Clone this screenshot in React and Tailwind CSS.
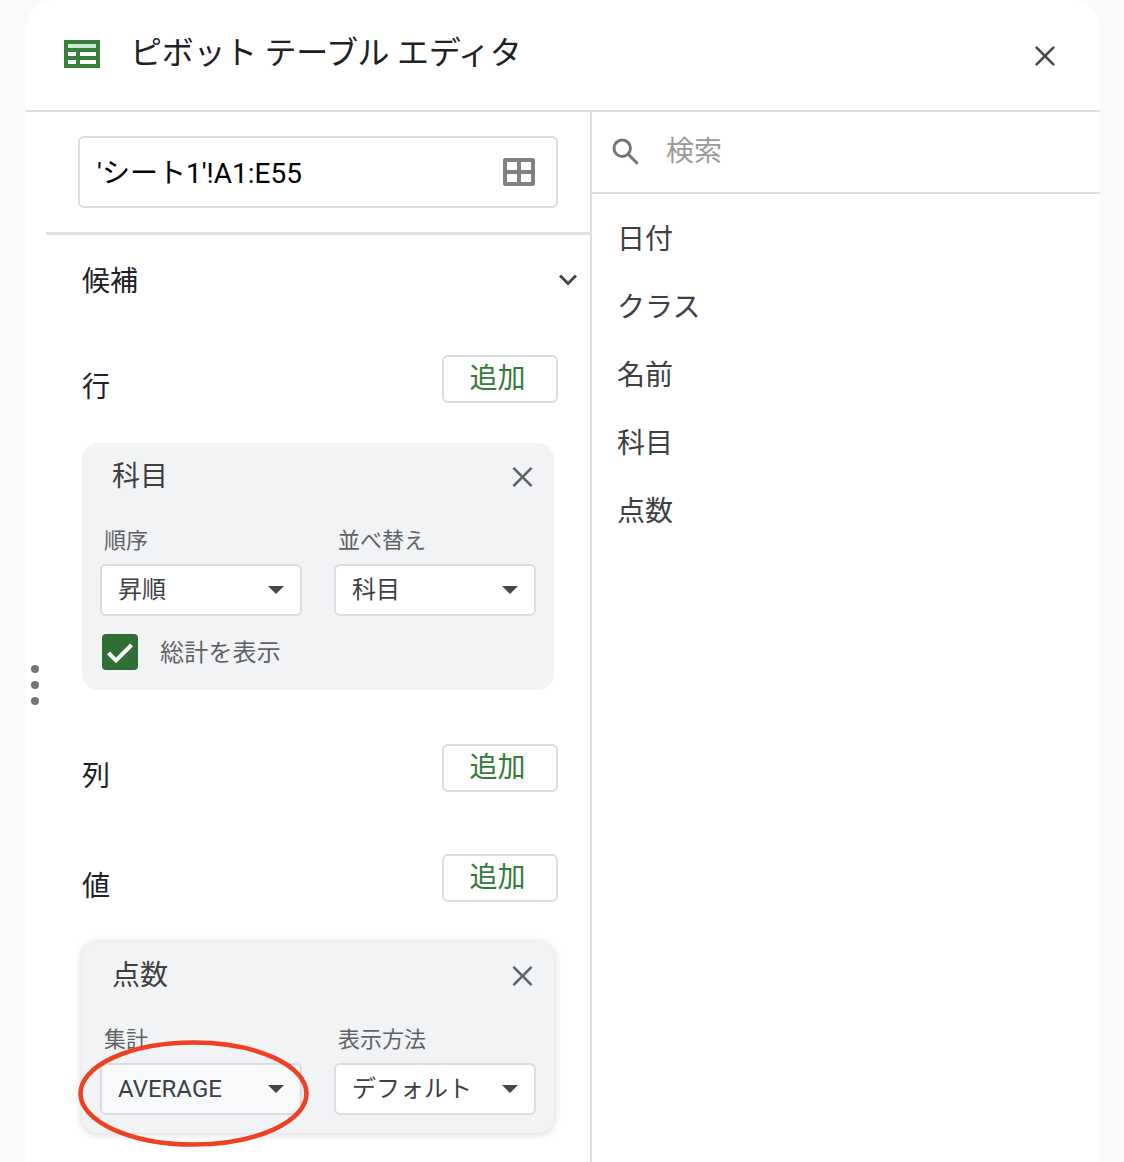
import React, { useState } from 'react';

const FIELDS = ['日付', 'クラス', '名前', '科目', '点数'];

function CloseIcon({ className }) {
	return (
		<svg className={className} viewBox="0 0 20 20" fill="none" stroke="currentColor" strokeWidth="2.6">
			<path d="M0.9 0.9L19.1 19.1M19.1 0.9L0.9 19.1" />
		</svg>
	);
}

function AddButton() {
	return (
		<button type="button" className="flex h-12 w-[116px] justify-center rounded-md border-2 border-[#dadce0] bg-white pr-[5px] text-[28px] leading-[44px] text-[#357a38]">
			追加
		</button>
	);
}

function Section({ title, className }) {
	return (
		<div className={`flex h-12 items-start justify-between pr-8 pl-9 ${className}`}>
			<h2 className="pt-2 text-[28px] leading-[50px] text-[#202124]">{title}</h2>
			<AddButton />
		</div>
	);
}

function Select({ label, value, active }) {
	return (
		<div className="w-[202px]">
			<div className="h-[42px] pl-1 text-[22px] leading-[38px] text-[#5f6368]">{label}</div>
			<button
				type="button"
				className={`flex h-[52px] w-full items-center justify-between rounded-md border-2 border-[#dadce0] pr-4 pl-4 text-[24px] leading-[48px] text-[#3c4043] ${active ? 'bg-[#f8f9fa]' : 'bg-white'}`}
			>
				<span>{value}</span>
				<svg className="h-2 w-4" viewBox="0 0 16 8" fill="#444746">
					<path d="M0 0h16L8 8z" />
				</svg>
			</button>
		</div>
	);
}

function FieldCard({ title, className, children }) {
	return (
		<div className={`ml-9 w-[472px] rounded-2xl bg-[#f1f3f4] pl-[18px] ${className}`}>
			<div className="flex h-[79px] items-start justify-between pr-[21px] pl-3">
				<h3 className="text-[28px] leading-[68px] text-[#3c4043]">{title}</h3>
				<button type="button" className="pt-6" aria-label="削除">
					<CloseIcon className="h-5 w-[21px] text-[#5f6368]" />
				</button>
			</div>
			{children}
		</div>
	);
}

function Header() {
	return (
		<header className="flex h-28 items-start border-b-2 border-[#dadce0] pr-[45px] pl-[38px]">
			<svg className="mt-10 h-7 w-9" viewBox="0 0 36 28">
				<path fill="#37803b" d="M0 0h36v28H0z" />
				<path fill="#ceead6" d="M4 4h28v4H4z" />
				<path fill="#fff" d="M4 12h8v4H4zM16 12h16v4H16zM4 20h8v4H4zM16 20h16v4H16z" />
			</svg>
			<h1 className="flex-1 pl-[30px] text-[32px] leading-[106px] tracking-[-0.3px] text-[#202124]">ピボット テーブル エディタ</h1>
			<button type="button" className="pt-[46px]" aria-label="閉じる">
				<CloseIcon className="h-5 w-5 text-[#444746]" />
			</button>
		</header>
	);
}

export default function App() {
	const [showTotals, setShowTotals] = useState(true);

	return (
		<div className="h-[1162px] w-[1124px] overflow-hidden bg-[#f9fafc] pr-6 pl-[26px] font-['Roboto','Noto_Sans_CJK_JP',sans-serif]">
			<div className="flex h-full flex-col rounded-t-[28px] bg-white">
				<Header />
				<div className="flex min-h-0 flex-1">
					{/* drag handle */}
					<div className="flex w-5 flex-col gap-2 pt-[553px] pl-[5px]">
						<span className="h-2 w-2 rounded-full bg-[#757575]" />
						<span className="h-2 w-2 rounded-full bg-[#757575]" />
						<span className="h-2 w-2 rounded-full bg-[#757575]" />
					</div>

					<div className="w-[546px] border-r-2 border-[#dadce0]">
						<div className="border-b-[3px] border-[#e0e0e0] pt-6 pr-8 pb-6 pl-8">
							<div className="flex h-[72px] items-center justify-between rounded-md border-2 border-[#dadce0] pr-[21px] pl-[17px] text-[28px] text-black">
								<span className="pt-1 leading-[64px]">'シート1'!A1:E55</span>
								<svg className="h-7 w-8" viewBox="0 0 32 28">
									<rect width="32" height="28" rx="2" fill="#808080" />
									<path fill="#fff" d="M4 4h10v8H4zM18 4h10v8H18zM4 16h10v8H4zM18 16h10v8H18z" />
								</svg>
							</div>
						</div>

						<div className="flex h-[90px] items-center justify-between pr-[13px] pl-9">
							<h2 className="pt-1 text-[28px] leading-[86px] text-[#202124]">候補</h2>
							<svg className="h-3 w-[18px]" viewBox="0 0 18 12" fill="none" stroke="#444746" strokeWidth="2.8">
								<path d="M1 1.5l8 8 8-8" />
							</svg>
						</div>

						<Section title="行" className="mt-[30px]" />
						<FieldCard title="科目" className="mt-10 h-[247px]">
							<div className="flex gap-8">
								<Select label="順序" value="昇順" />
								<Select label="並べ替え" value="科目" />
							</div>
							<button type="button" className="mt-[18px] flex items-start pl-0.5" onClick={() => setShowTotals(!showTotals)}>
								<span className="flex h-9 w-9 items-center justify-center rounded bg-[#306e35]">
									{showTotals && (
										<svg className="h-9 w-9" viewBox="0 0 36 36" fill="none" stroke="#fff" strokeWidth="4">
											<path d="M6.5 19l7.5 7.5L29.5 11" />
										</svg>
									)}
								</span>
								<span className="pl-[22px] text-[24px] leading-[38px] tracking-[0.2px] text-[#5f6368]">総計を表示</span>
							</button>
						</FieldCard>

						<Section title="列" className="mt-[54px]" />
						<Section title="値" className="mt-[62px]" />
						<FieldCard title="点数" className="relative mt-10 h-[191px] shadow-[0_1px_6px_2px_rgba(60,64,67,0.15)]">
							<div className="flex gap-8">
								<Select label="集計" value="AVERAGE" active />
								<Select label="表示方法" value="デフォルト" />
							</div>
							{/* highlight around the aggregation select */}
							<svg className="pointer-events-none absolute top-[98px] -left-[4px] h-[107px] w-[231px]" viewBox="0 0 231 107" fill="none">
								<ellipse cx="115.5" cy="53.5" rx="113" ry="51" stroke="#ee4023" strokeWidth="4.6" />
							</svg>
						</FieldCard>
					</div>

					<div className="flex-1">
						<div className="flex h-[82px] items-start border-b-2 border-[#dadce0] pl-5">
							<svg className="mt-[26px] h-[27px] w-[27px]" viewBox="0 0 27 27" fill="none" stroke="#757575" strokeWidth="3">
								<circle cx="10.2" cy="10.2" r="8.2" />
								<path d="M16 16l9.7 9.7" />
							</svg>
							<span className="pl-[27px] text-[28px] leading-[80px] text-[#9a9a9a]">検索</span>
						</div>
						<ul className="pt-3 pl-[25px] text-[28px] text-[#3c4043]">
							{FIELDS.map((name) => (
								<li key={name} className="h-[68px] leading-[68px]">{name}</li>
							))}
						</ul>
					</div>
				</div>
			</div>
		</div>
	);
}
